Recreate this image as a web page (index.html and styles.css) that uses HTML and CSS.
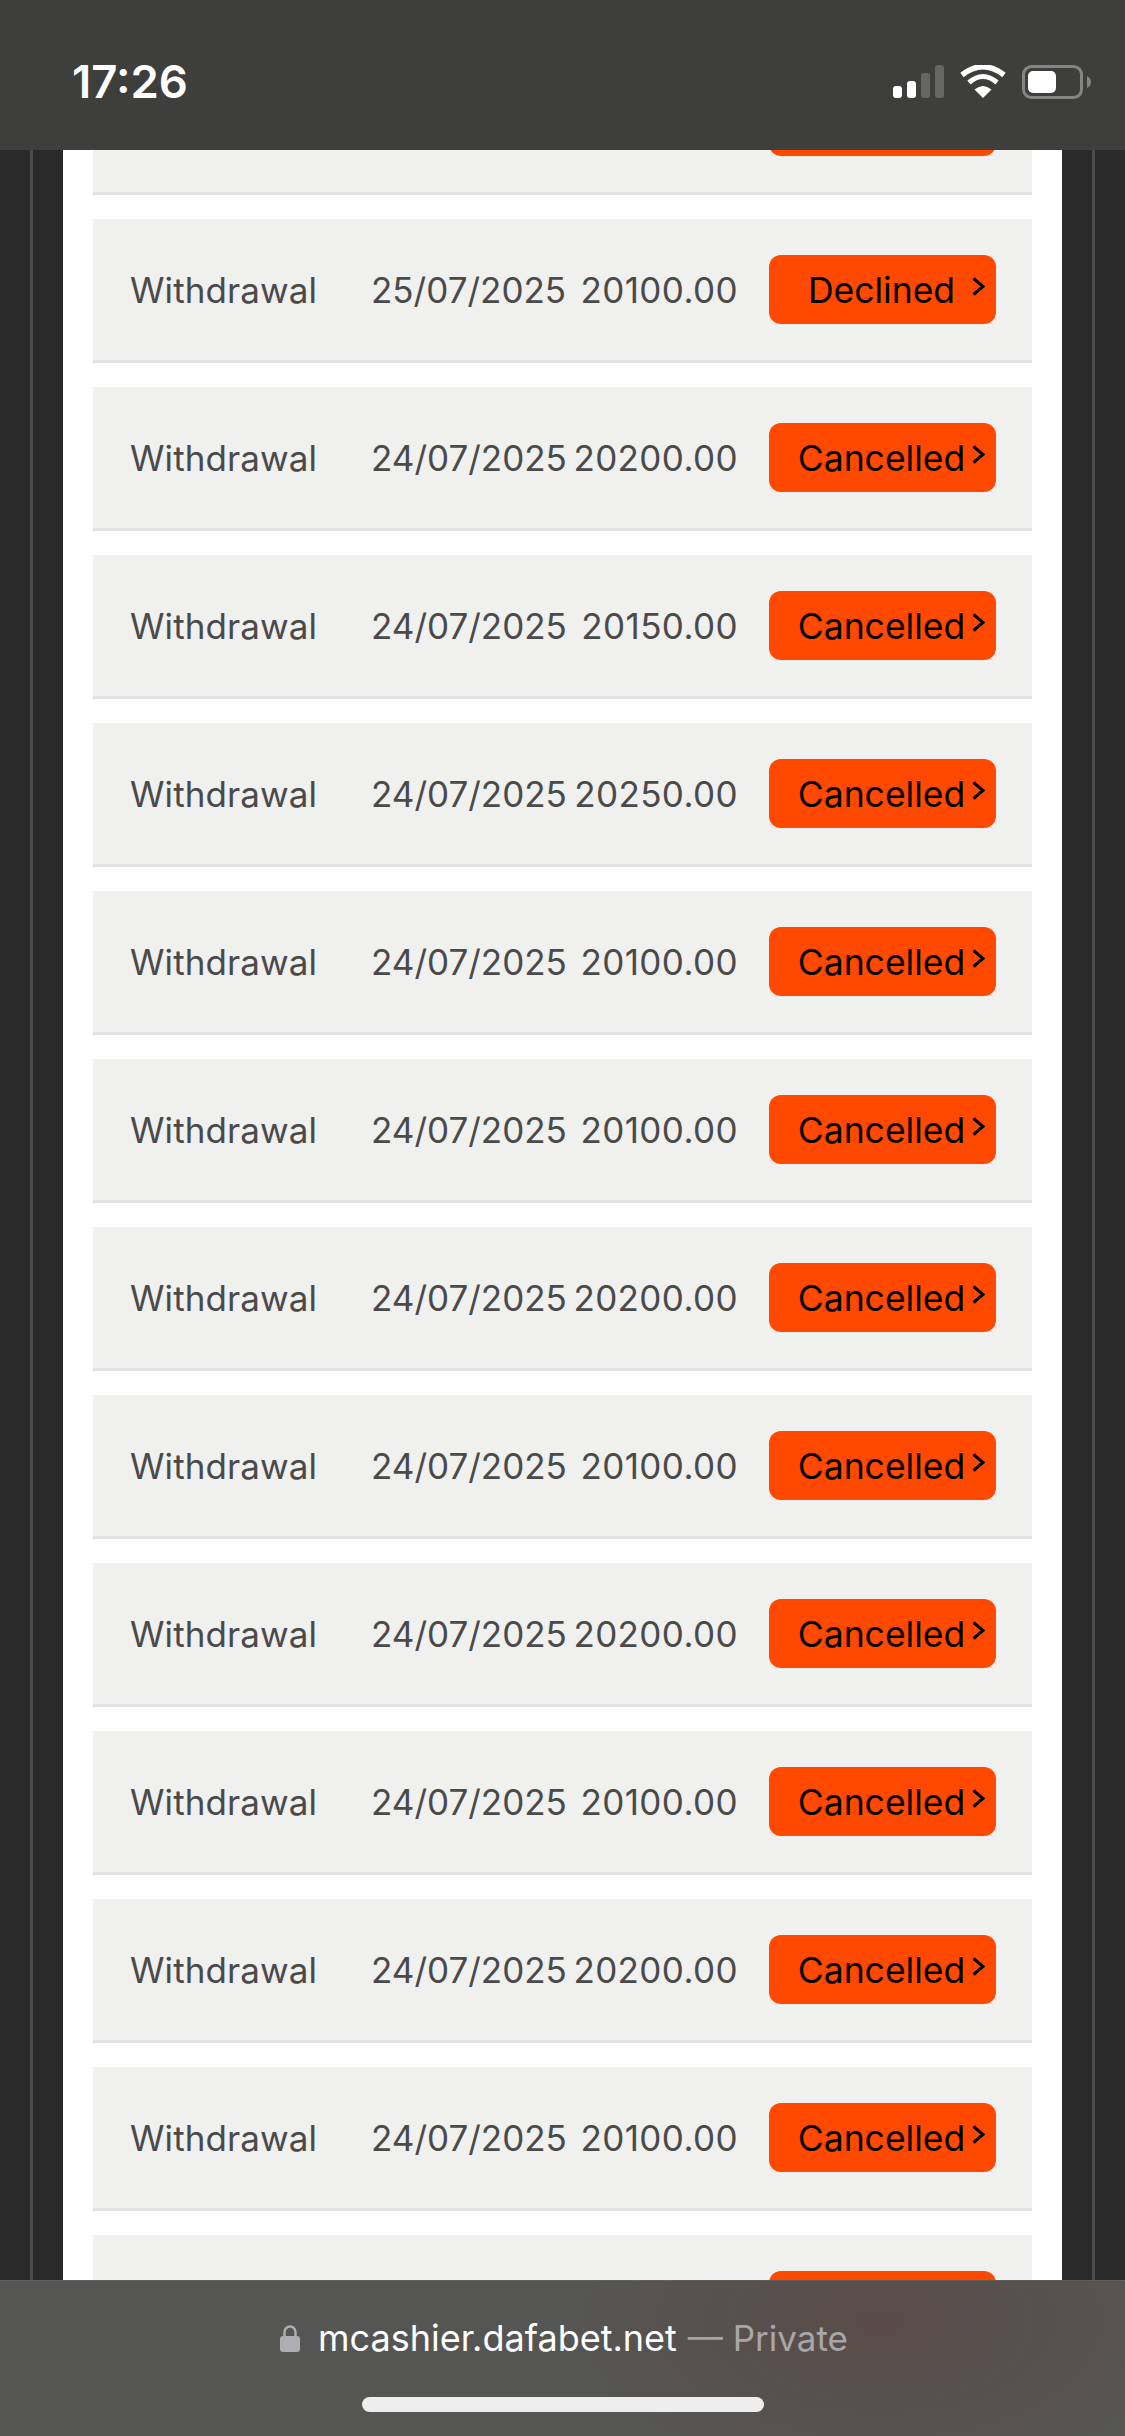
FILE: index.html
```html
<!DOCTYPE html>
<html lang="en">
  <head>
    <meta charset="UTF-8" />
    <meta name="viewport" content="width=device-width, initial-scale=1.0" />
    <title>Transaction history</title>
    <link rel="stylesheet" href="styles.css">
  </head>
  <body>
    <div class="status-bar">
      <span class="clock">17:26</span>
      <div class="status-icons">
        <svg class="signal" width="51" height="33" viewBox="0 0 51 33">
          <rect x="0" y="21" width="9" height="12" rx="3" fill="#fff" />
          <rect x="14" y="16" width="9" height="17" rx="3" fill="#fff" />
          <rect x="28" y="8" width="9" height="25" rx="3" fill="#666665" />
          <rect x="42" y="0" width="9" height="33" rx="3" fill="#666665" />
        </svg>
        <svg class="wifi" width="46" height="33" viewBox="0 0 46 33">
          <path d="M23 33 L14.5 24.5 Q23 17.5 31.5 24.5 Z" fill="#fff" />
          <path d="M9 17.5 Q23 5.5 37 17.5" fill="none" stroke="#fff" stroke-width="5" />
          <path d="M2 10 Q23 -6.5 44 10" fill="none" stroke="#fff" stroke-width="5.5" />
        </svg>
        <svg class="battery" width="69" height="34" viewBox="0 0 69 34">
          <rect x="1.5" y="1.5" width="58" height="31" rx="8" fill="none" stroke="#858584" stroke-width="3" />
          <rect x="6" y="6" width="28" height="22" rx="5" fill="#fff" />
          <path d="M65 11 Q69 13 69 17 Q69 21 65 23 Z" fill="#858584" />
        </svg>
      </div>
    </div>

    <div class="page">
      <div class="page-rail">
        <div class="sheet">
          <div class="history-list">
            <div class="history-row">
              <a class="tx-status"></a>
            </div>
            <div class="history-row">
              <span class="tx-type">Withdrawal</span>
              <span class="tx-date">25/07/2025</span>
              <span class="tx-amount">20100.00</span>
              <a class="tx-status">Declined<svg class="chevron" width="13" height="19" viewBox="0 0 13 19"><path d="M1.5 1.5 L11 9.5 L1.5 17.5" /></svg></a>
            </div>
            <div class="history-row">
              <span class="tx-type">Withdrawal</span>
              <span class="tx-date">24/07/2025</span>
              <span class="tx-amount">20200.00</span>
              <a class="tx-status">Cancelled<svg class="chevron" width="13" height="19" viewBox="0 0 13 19"><path d="M1.5 1.5 L11 9.5 L1.5 17.5" /></svg></a>
            </div>
            <div class="history-row">
              <span class="tx-type">Withdrawal</span>
              <span class="tx-date">24/07/2025</span>
              <span class="tx-amount">20150.00</span>
              <a class="tx-status">Cancelled<svg class="chevron" width="13" height="19" viewBox="0 0 13 19"><path d="M1.5 1.5 L11 9.5 L1.5 17.5" /></svg></a>
            </div>
            <div class="history-row">
              <span class="tx-type">Withdrawal</span>
              <span class="tx-date">24/07/2025</span>
              <span class="tx-amount">20250.00</span>
              <a class="tx-status">Cancelled<svg class="chevron" width="13" height="19" viewBox="0 0 13 19"><path d="M1.5 1.5 L11 9.5 L1.5 17.5" /></svg></a>
            </div>
            <div class="history-row">
              <span class="tx-type">Withdrawal</span>
              <span class="tx-date">24/07/2025</span>
              <span class="tx-amount">20100.00</span>
              <a class="tx-status">Cancelled<svg class="chevron" width="13" height="19" viewBox="0 0 13 19"><path d="M1.5 1.5 L11 9.5 L1.5 17.5" /></svg></a>
            </div>
            <div class="history-row">
              <span class="tx-type">Withdrawal</span>
              <span class="tx-date">24/07/2025</span>
              <span class="tx-amount">20100.00</span>
              <a class="tx-status">Cancelled<svg class="chevron" width="13" height="19" viewBox="0 0 13 19"><path d="M1.5 1.5 L11 9.5 L1.5 17.5" /></svg></a>
            </div>
            <div class="history-row">
              <span class="tx-type">Withdrawal</span>
              <span class="tx-date">24/07/2025</span>
              <span class="tx-amount">20200.00</span>
              <a class="tx-status">Cancelled<svg class="chevron" width="13" height="19" viewBox="0 0 13 19"><path d="M1.5 1.5 L11 9.5 L1.5 17.5" /></svg></a>
            </div>
            <div class="history-row">
              <span class="tx-type">Withdrawal</span>
              <span class="tx-date">24/07/2025</span>
              <span class="tx-amount">20100.00</span>
              <a class="tx-status">Cancelled<svg class="chevron" width="13" height="19" viewBox="0 0 13 19"><path d="M1.5 1.5 L11 9.5 L1.5 17.5" /></svg></a>
            </div>
            <div class="history-row">
              <span class="tx-type">Withdrawal</span>
              <span class="tx-date">24/07/2025</span>
              <span class="tx-amount">20200.00</span>
              <a class="tx-status">Cancelled<svg class="chevron" width="13" height="19" viewBox="0 0 13 19"><path d="M1.5 1.5 L11 9.5 L1.5 17.5" /></svg></a>
            </div>
            <div class="history-row">
              <span class="tx-type">Withdrawal</span>
              <span class="tx-date">24/07/2025</span>
              <span class="tx-amount">20100.00</span>
              <a class="tx-status">Cancelled<svg class="chevron" width="13" height="19" viewBox="0 0 13 19"><path d="M1.5 1.5 L11 9.5 L1.5 17.5" /></svg></a>
            </div>
            <div class="history-row">
              <span class="tx-type">Withdrawal</span>
              <span class="tx-date">24/07/2025</span>
              <span class="tx-amount">20200.00</span>
              <a class="tx-status">Cancelled<svg class="chevron" width="13" height="19" viewBox="0 0 13 19"><path d="M1.5 1.5 L11 9.5 L1.5 17.5" /></svg></a>
            </div>
            <div class="history-row">
              <span class="tx-type">Withdrawal</span>
              <span class="tx-date">24/07/2025</span>
              <span class="tx-amount">20100.00</span>
              <a class="tx-status">Cancelled<svg class="chevron" width="13" height="19" viewBox="0 0 13 19"><path d="M1.5 1.5 L11 9.5 L1.5 17.5" /></svg></a>
            </div>
            <div class="history-row">
              <a class="tx-status"></a>
            </div>
          </div>
        </div>
      </div>
    </div>

    <div class="browser-bar">
      <div class="address">
        <svg class="lock" width="20" height="28" viewBox="0 0 20 28">
          <path d="M4.5 13 V8 a5.5 5.5 0 0 1 11 0 V13" fill="none" stroke="#aeaeb2" stroke-width="2.5" />
          <rect x="0" y="12" width="20" height="16" rx="3" fill="#aeaeb2" />
        </svg>
        <span class="host">mcashier.dafabet.net</span>
        <span class="private">— Private</span>
      </div>
      <div class="home-bar"></div>
    </div>
  </body>
</html>
```

FILE: styles.css
```css
html,
body {
  margin: 0;
}
body {
  width: 1125px;
  height: 2436px;
  display: flex;
  flex-direction: column;
  overflow: hidden;
  font-family: Inter, "Liberation Sans", sans-serif;
  background-color: #2b2a2a;
}

/* top status bar */
.status-bar {
  height: 150px;
  flex: none;
  box-sizing: border-box;
  padding: 65px 34px 0 72px;
  display: flex;
  justify-content: space-between;
  align-items: flex-start;
  background-color: #3e3e3c;
}
.clock {
  font-size: 45.5px;
  line-height: 33px;
  font-weight: 600;
  color: #fff;
}
.status-icons {
  display: flex;
  gap: 16px;
  align-items: flex-start;
}

/* scrolled page */
.page {
  flex: 1;
  min-height: 0;
  display: flex;
  padding: 0 30px;
}
.page-rail {
  flex: 1;
  display: flex;
  padding: 0 30px;
  border-left: 3px solid #4b4b4b;
  border-right: 3px solid #4b4b4b;
}
.sheet {
  flex: 1;
  overflow: hidden;
  padding: 0 30px;
  background: white;
}
.history-list {
  display: flex;
  flex-direction: column;
  gap: 24px;
  margin-top: -99px;
}
.history-row {
  height: 144px;
  flex: none;
  box-sizing: border-box;
  padding: 36px 36px 0 37px;
  display: flex;
  background-color: #f0f0ee;
  border-bottom: 3px solid #e2e2e2;
  color: #4a4a4a;
  font-size: 35px;
}
.tx-type,
.tx-date,
.tx-amount {
  height: 69px;
  line-height: 71px;
}
.tx-type {
  width: 241px;
  letter-spacing: 0.1px;
}
.tx-date {
  width: 194px;
  white-space: nowrap;
}
.tx-amount {
  width: 173px;
  text-align: right;
  letter-spacing: 0.4px;
}
.tx-status {
  position: relative;
  width: 227px;
  height: 69px;
  margin-left: auto;
  padding-right: 2px;
  box-sizing: border-box;
  line-height: 71px;
  text-align: center;
  font-size: 35.5px;
  color: #000;
  background-color: #ff4800;
  border-radius: 12px;
}
.chevron {
  position: absolute;
  top: 22px;
  right: 11px;
  fill: none;
  stroke: #000;
  stroke-width: 3;
}

/* browser bottom bar */
.browser-bar {
  height: 156px;
  flex: none;
  box-sizing: border-box;
  padding-top: 37px;
  display: flex;
  flex-direction: column;
  align-items: center;
  background: radial-gradient(ellipse 300px 160px at 880px 40px, #5a4c48, rgba(90, 76, 72, 0) 100%), #555553;
  border-top: 1px solid #5e5e5c;
}
.address {
  display: flex;
  align-items: center;
  height: 40px;
  margin-left: 3px;
  font-size: 36px;
}
.lock {
  margin-right: 18px;
}
.host {
  color: #fff;
}
.private {
  margin-left: 11px;
  font-size: 35px;
  color: #a8a6a8;
}
.home-bar {
  width: 402px;
  height: 15px;
  margin-top: 39px;
  border-radius: 8px;
  background-color: #eeeeee;
}
```
